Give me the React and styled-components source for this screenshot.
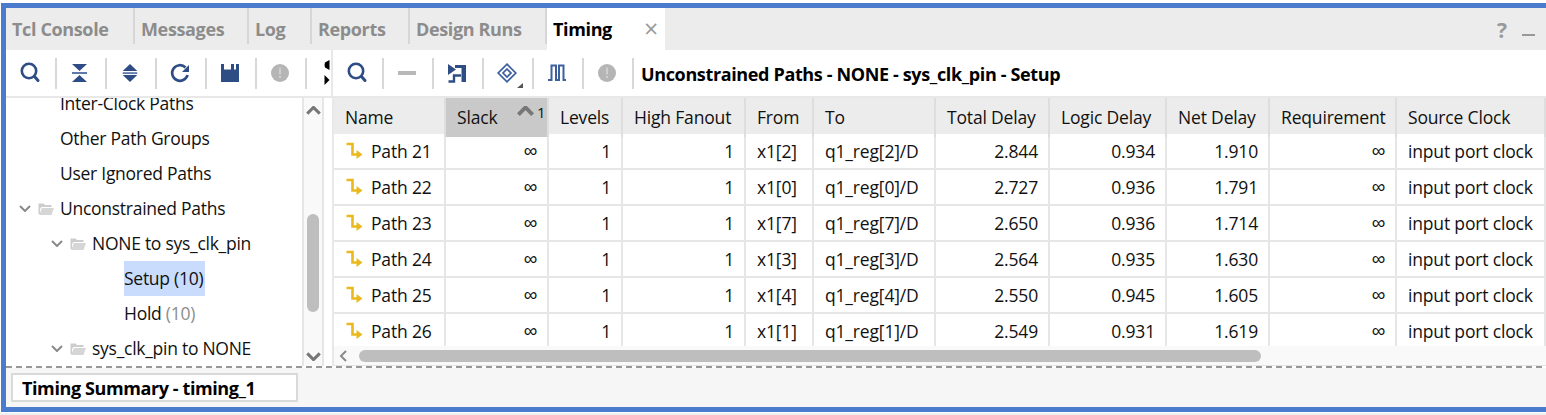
import React from "react";
import styled, { createGlobalStyle } from "styled-components";

const Global = createGlobalStyle`
  html, body { margin: 0; padding: 0; background: #fff; }
  body { font-family: "Open Sans", "Noto Sans", "Liberation Sans", sans-serif; color: #111; }
`;

const BLUE = "#2f4d85";

const Page = styled.div`
  width: 1546px;
  height: 415px;
  overflow: hidden;
  padding-top: 3px;
  box-sizing: border-box;
`;
const Frame = styled.div`
  margin-left: 1px;
  height: 409px;
  box-sizing: border-box;
  border-top: 5px solid #4a7bcd;
  border-bottom: 5px solid #4a7bcd;
  border-left: 5px solid #4a7bcd;
  display: flex;
  flex-direction: column;
`;
const BottomStrip = styled.div`
  height: 2px;
  margin-top: 1px;
  background: #f0f0f0;
`;
const TabBar = styled.div`
  height: 42px;
  flex: none;
  display: flex;
  background: #ececec;
`;
const Tab = styled.div`
  width: ${(p) => p.$w}px;
  height: ${(p) => (p.$active ? 42 : 36)}px;
  box-sizing: border-box;
  padding: 4px 0 0 6px;
  font-size: 18px;
  font-weight: 700;
  letter-spacing: -0.36px;
  line-height: 34px;
  color: ${(p) => (p.$active ? "#000" : "#8c8c8c")};
  background: ${(p) => (p.$active ? "#fff" : "transparent")};
  border-right: ${(p) => (p.$active ? "none" : "2px solid #d6d6d6")};
  display: flex;
  justify-content: space-between;
`;
const TabClose = styled.span`
  font-weight: 400;
  font-size: 25px;
  color: #9a9a9a;
  margin-right: 7px;
  margin-top: -1px;
`;
const TabActions = styled.div`
  margin-left: auto;
  display: flex;
  align-items: center;
  gap: 15px;
  padding: 2px 11px 0 0;
  color: #999;
  font-weight: 700;
  font-size: 21px;
`;
const Minimize = styled.span`
  width: 13px;
  height: 2px;
  background: #999;
  margin-top: 10px;
`;
const ToolRow = styled.div`
  height: 46px;
  flex: none;
  display: flex;
  border-bottom: 2px solid #e8e8e8;
`;
const LeftTools = styled.div`
  width: 324px;
  flex: none;
  display: flex;
  align-items: center;
  padding-left: 1px;
  border-right: 2px solid #e8e8e8;
  overflow: hidden;
`;
const RightTools = styled.div`
  flex: 1;
  display: flex;
  align-items: center;
  padding-left: 1px;
`;
const ToolCell = styled.div`
  width: 48px;
  height: 31px;
  flex: none;
  display: flex;
  align-items: center;
  justify-content: center;
`;
const ToolSep = styled.div`
  width: 2px;
  height: 31px;
  flex: none;
  background: #d8d8d8;
`;
const ClipIcon = styled.svg`
  flex: none;
  margin-left: 17px;
`;
const ToolIcon = styled.svg`
  overflow: visible;
  display: block;
`;
const PanelTitle = styled.div`
  font-size: 18px;
  font-weight: 700;
  letter-spacing: -0.36px;
  color: #000;
  margin: 2px 0 0 7px;
  white-space: nowrap;
`;
const Body = styled.div`
  height: 268px;
  flex: none;
  display: flex;
`;
const TreePane = styled.div`
  width: 296px;
  flex: none;
  overflow: hidden;
  border-right: 2px solid #e6e6e6;
`;
const TreeList = styled.div`
  margin-top: -12px;
`;
const TreeRow = styled.div`
  height: 35px;
  display: flex;
  align-items: center;
  padding-left: ${(p) => p.$indent}px;
  font-size: 17.5px;
  letter-spacing: -0.27px;
  white-space: nowrap;
`;
const TreeLabel = styled.span`
  margin-left: ${(p) => p.$gap || 0}px;
  height: 35px;
  line-height: 35px;
  padding-right: ${(p) => (p.$selected ? 2 : 0)}px;
  background: ${(p) => (p.$selected ? "#c9dcfd" : "transparent")};
`;
const Muted = styled.span`
  color: #8d8d8d;
`;
const VScroll = styled.div`
  width: 18px;
  flex: none;
  background: #f9f9f9;
  border-right: 2px solid #e6e6e6;
  display: flex;
  flex-direction: column;
  align-items: center;
`;
const ScrollEnd = styled.span`
  margin-top: ${(p) => p.$top}px;
`;
const VThumb = styled.div`
  width: 12px;
  height: 98px;
  margin-top: 99px;
  margin-bottom: 40px;
  border-radius: 6px;
  background: #bebebe;
`;
const PaneGutter = styled.div`
  width: 8px;
  flex: none;
  border-right: 2px solid #e8e8e8;
`;
const TablePane = styled.div`
  flex: 1;
  min-width: 0;
  display: flex;
  flex-direction: column;
`;
const Table = styled.div`
  height: 248px;
  flex: none;
  overflow: hidden;
`;
const COLS = "112px 103px 74px 123px 68px 122px 114px 117px 103px 127px 1fr";
const HeadRow = styled.div`
  display: grid;
  grid-template-columns: ${COLS};
  height: 36px;
  background: #ececec;
`;
const HeadCell = styled.div`
  position: relative;
  box-sizing: border-box;
  padding-left: 11px;
  font-size: 17.5px;
  letter-spacing: -0.17px;
  line-height: 39px;
  white-space: nowrap;
  border-right: 2px solid #dedede;
  background: ${(p) => (p.$sorted ? "#c9c9c9" : "transparent")};
`;
const SortMark = styled.span`
  position: absolute;
  left: 71px;
  top: 5px;
  display: flex;
  align-items: flex-start;
  gap: 3px;
  font-size: 15px;
  line-height: 18px;
`;
const SortArrow = styled.span`
  margin-top: 3px;
`;
const DataRow = styled.div`
  display: grid;
  grid-template-columns: ${COLS};
  height: 36px;
  border-bottom: 2px solid #e6e6e6;
  box-sizing: border-box;
`;
const Cell = styled.div`
  box-sizing: border-box;
  display: flex;
  align-items: center;
  justify-content: ${(p) => (p.$num ? "flex-end" : "flex-start")};
  padding: ${(p) => (p.$num ? "0 10px 0 0" : `0 0 0 ${p.$pad ?? 11}px`)};
  font-size: 17.5px;
  letter-spacing: -0.17px;
  white-space: nowrap;
  border-right: 2px solid #e6e6e6;
`;
const Infinity_ = styled.span`
  font-family: "Liberation Sans", sans-serif;
  font-size: 19px;
  line-height: 20px;
`;
const PathIcon = styled.svg`
  margin-right: 8px;
  flex: none;
`;
const HScroll = styled.div`
  height: 19px;
  flex: none;
  background: #f9f9f9;
  border-bottom: 1px solid #e4e4e4;
  display: flex;
  align-items: center;
  padding-left: 5px;
`;
const ScrollLeft = styled.svg`
  flex: none;
`;
const HThumb = styled.div`
  width: 902px;
  height: 12px;
  margin-left: 12px;
  border-radius: 6px;
  background: #bebebe;
`;
const Dashes = styled.div`
  height: 2px;
  flex: none;
  background: repeating-linear-gradient(90deg, #989898 0 6px, transparent 6px 10px);
`;
const Footer = styled.div`
  flex: 1;
  background: #f6f6f6;
  padding: 5px 0 0 5px;
`;
const FooterTab = styled.div`
  width: 287px;
  height: 29px;
  box-sizing: border-box;
  background: #fff;
  border: 2px solid #d9d9d9;
  padding-left: 9px;
  font-size: 18px;
  font-weight: 700;
  letter-spacing: -0.4px;
  line-height: 26px;
  color: #000;
`;
const ChevronSvg = styled.svg`
  flex: none;
  display: block;
`;
const FolderSvg = styled.svg`
  flex: none;
  margin-left: 7px;
`;

const Icon = ({ children }) => (
  <ToolIcon width="24" height="24" viewBox="0 0 24 24">{children}</ToolIcon>
);

const Search = () => (
  <Icon>
    <circle cx="10" cy="10" r="7.2" fill="none" stroke={BLUE} strokeWidth="2.6" />
    <path d="M15.5 15.5 L19 19.5" stroke={BLUE} strokeWidth="3" strokeLinecap="round" />
  </Icon>
);
const Collapse = () => (
  <Icon>
    <path d="M3 3H18L10.5 10Z" fill={BLUE} />
    <rect x="3" y="11" width="15" height="2" fill="#5f79a8" />
    <path d="M10.5 14L18 21H3Z" fill={BLUE} />
  </Icon>
);
const Expand = () => (
  <Icon>
    <path d="M11 3L18.3 10H3.7Z" fill={BLUE} />
    <rect x="3.7" y="11.2" width="14.6" height="1.8" fill="#5f79a8" />
    <path d="M3.7 14H18.3L11 21Z" fill={BLUE} />
  </Icon>
);
const Refresh = () => (
  <Icon>
    <path d="M16.5 6.5A7.8 7.8 0 1 0 18.5 14" fill="none" stroke={BLUE} strokeWidth="2.7" />
    <path d="M20 4V11H13Z" fill={BLUE} />
  </Icon>
);
const Save = () => (
  <Icon>
    <path d="M2 3H20V21H2Z" fill={BLUE} />
    <path d="M5 3H12V8.5H5ZM15 3H17V8.5H15Z" fill="#fff" />
  </Icon>
);
const Alert = () => (
  <Icon>
    <circle cx="11" cy="12" r="9" fill="#b5b5b5" />
    <rect x="10" y="6.5" width="2" height="7" fill="#cfcfcf" />
    <rect x="10" y="15" width="2" height="2" fill="#cfcfcf" />
  </Icon>
);
const Minus = () => (
  <Icon>
    <rect x="2" y="10" width="18" height="4" fill="#b8b8b8" />
  </Icon>
);
const Schematic = () => (
  <Icon>
    <path d="M2 3L10 8.5L2 14Z" fill={BLUE} />
    <path d="M9 4H20V21H15.5V7H9Z" fill={BLUE} />
    <path d="M2.5 20.5H8V14.5H15" fill="none" stroke={BLUE} strokeWidth="2.4" />
  </Icon>
);
const Diamond = () => (
  <Icon>
    <path d="M11 3.2L19.8 12L11 20.8L2.2 12Z" fill="none" stroke="#3c5f9e" strokeWidth="1.7" />
    <path d="M11 8L15 12L11 16L7 12Z" fill="none" stroke="#3c5f9e" strokeWidth="1.7" />
    <path d="M27 22V27H21Z" fill="#555" />
  </Icon>
);
const Pulse = () => (
  <Icon>
    <path d="M2 19H5.5V4.5H10V19H13V4.5H17.5V19H20" fill="none" stroke="#3c5f9e" strokeWidth="2" />
  </Icon>
);
const Chevron = ({ dir = "down", color = "#8a8a8a", w = 12, h = 7, sw = 2 }) => (
  <ChevronSvg width={w} height={h} viewBox="0 0 12 7">
    <path
      d={dir === "down" ? "M1 1L6 6L11 1" : "M1 6L6 1L11 6"}
      fill="none"
      stroke={color}
      strokeWidth={sw}
    />
  </ChevronSvg>
);
const Folder = () => (
  <FolderSvg width="16" height="14" viewBox="0 0 16 14">
    <path d="M0.5 1.5H5.5L7 3H13.5V5H3.5L2 7V12H0.5Z" fill="#cdcdcd" />
    <path d="M3.8 6H16L13.5 13H1.2Z" fill="#d6d6d6" />
  </FolderSvg>
);
const PathArrow = () => (
  <PathIcon width="17" height="18" viewBox="0 0 17 18">
    <path d="M0.5 2H6.5V12.5H11" fill="none" stroke="#e9b91f" strokeWidth="2.6" />
    <path d="M10.5 8L16.5 12.5L10.5 17Z" fill="#e9b91f" />
  </PathIcon>
);

const tree = [
  { label: "Inter-Clock Paths", indent: 54 },
  { label: "Other Path Groups", indent: 54 },
  { label: "User Ignored Paths", indent: 54 },
  { label: "Unconstrained Paths", indent: 13, folder: true },
  { label: "NONE to sys_clk_pin", indent: 45, folder: true },
  { label: "Setup (10)", indent: 118, selected: true },
  { label: "Hold ", muted: "(10)", indent: 118 },
  { label: "sys_clk_pin to NONE", indent: 45, folder: true },
];

const headers = ["Name", "Slack", "Levels", "High Fanout", "From", "To", "Total Delay", "Logic Delay", "Net Delay", "Requirement", "Source Clock"];

const rows = [
  ["Path 21", "x1[2]", "q1_reg[2]/D", "2.844", "0.934", "1.910"],
  ["Path 22", "x1[0]", "q1_reg[0]/D", "2.727", "0.936", "1.791"],
  ["Path 23", "x1[7]", "q1_reg[7]/D", "2.650", "0.936", "1.714"],
  ["Path 24", "x1[3]", "q1_reg[3]/D", "2.564", "0.935", "1.630"],
  ["Path 25", "x1[4]", "q1_reg[4]/D", "2.550", "0.945", "1.605"],
  ["Path 26", "x1[1]", "q1_reg[1]/D", "2.549", "0.931", "1.619"],
];

const tabs = [
  ["Tcl Console", 129],
  ["Messages", 114],
  ["Log", 63],
  ["Reports", 98],
  ["Design Runs", 137],
];

const leftTools = [Search, Collapse, Expand, Refresh, Save, Alert];
const rightTools = [Search, Minus, Schematic, Diamond, Pulse, Alert];

export default function App() {
  return (
    <Page>
      <Global />
      <Frame>
        <TabBar>
          {tabs.map(([t, w]) => (
            <Tab key={t} $w={w}>{t}</Tab>
          ))}
          <Tab $w={118} $active>
            Timing
            <TabClose>×</TabClose>
          </Tab>
          <TabActions>
            <span>?</span>
            <Minimize />
          </TabActions>
        </TabBar>
        <ToolRow>
          <LeftTools>
            {leftTools.map((C, i) => (
              <React.Fragment key={i}>
                <ToolCell><C /></ToolCell>
                <ToolSep />
              </React.Fragment>
            ))}
            <ClipIcon width="6" height="26" viewBox="0 0 6 26">
              <path d="M5.5 0V10L1 7.5Q0 5 1 2.5Z" fill="#000" />
              <path d="M0.5 15L5.5 20L0.5 25Z" fill="#000" />
            </ClipIcon>
          </LeftTools>
          <RightTools>
            {rightTools.map((C, i) => (
              <React.Fragment key={i}>
                <ToolCell><C /></ToolCell>
                <ToolSep />
              </React.Fragment>
            ))}
            <PanelTitle>Unconstrained Paths - NONE - sys_clk_pin - Setup</PanelTitle>
          </RightTools>
        </ToolRow>
        <Body>
          <TreePane>
            <TreeList>
              {tree.map((n) => (
                <TreeRow key={n.label} $indent={n.indent}>
                  {n.folder && <Chevron />}
                  {n.folder && <Folder />}
                  <TreeLabel $gap={n.folder ? 6 : 0} $selected={n.selected}>
                    {n.label}
                    {n.muted && <Muted>{n.muted}</Muted>}
                  </TreeLabel>
                </TreeRow>
              ))}
            </TreeList>
          </TreePane>
          <VScroll>
            <ScrollEnd $top={8}>
              <Chevron dir="up" color="#777" w={15} h={9} sw={2.4} />
            </ScrollEnd>
            <VThumb />
            <Chevron dir="down" color="#777" w={15} h={9} sw={2.4} />
          </VScroll>
          <PaneGutter />
          <TablePane>
            <Table>
              <HeadRow>
                {headers.map((h) => (
                  <HeadCell key={h} $sorted={h === "Slack"}>
                    {h}
                    {h === "Slack" && (
                      <SortMark>
                        <SortArrow>
                          <Chevron dir="up" color="#777" w={17} h={10} sw={2.8} />
                        </SortArrow>
                        1
                      </SortMark>
                    )}
                  </HeadCell>
                ))}
              </HeadRow>
              {rows.map((r) => (
                <DataRow key={r[0]}>
                  <Cell $pad={12}><PathArrow />{r[0]}</Cell>
                  <Cell $num><Infinity_>∞</Infinity_></Cell>
                  <Cell $num>1</Cell>
                  <Cell $num>1</Cell>
                  <Cell>{r[1]}</Cell>
                  <Cell>{r[2]}</Cell>
                  <Cell $num>{r[3]}</Cell>
                  <Cell $num>{r[4]}</Cell>
                  <Cell $num>{r[5]}</Cell>
                  <Cell $num><Infinity_>∞</Infinity_></Cell>
                  <Cell>input port clock</Cell>
                </DataRow>
              ))}
            </Table>
            <HScroll>
              <ScrollLeft width="8" height="12" viewBox="0 0 8 12">
                <path d="M7 1L2 6L7 11" fill="none" stroke="#8a8a8a" strokeWidth="2" />
              </ScrollLeft>
              <HThumb />
            </HScroll>
          </TablePane>
        </Body>
        <Dashes />
        <Footer>
          <FooterTab>Timing Summary - timing_1</FooterTab>
        </Footer>
      </Frame>
      <BottomStrip />
    </Page>
  );
}
